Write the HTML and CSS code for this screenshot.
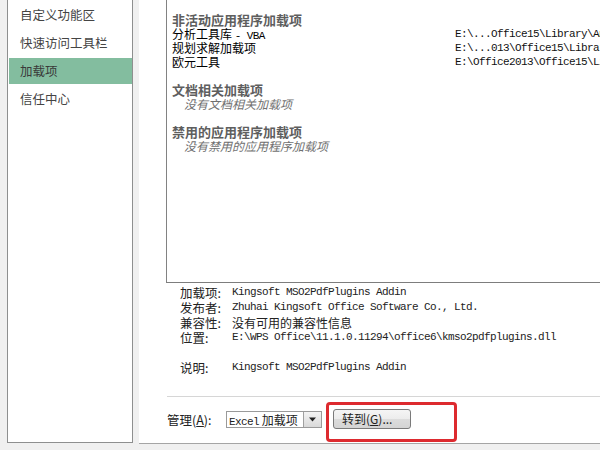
FILE: index.html
```html
<!DOCTYPE html>
<html lang="zh-CN">
<head>
<meta charset="utf-8">
<title>加载项</title>
<link rel="stylesheet" href="styles.css">
</head>
<body>
<div class="page">
  <nav class="sidebar">
    <div class="nav-item">自定义功能区</div>
    <div class="nav-item">快速访问工具栏</div>
    <div class="nav-item active">加载项</div>
    <div class="nav-item">信任中心</div>
  </nav>
  <main class="main">
    <div class="listbox">
      <div class="group-title">非活动应用程序加载项</div>
      <div class="row"><span class="name">分析工具库 <span class="mono">- VBA</span></span><span class="path">E:\...Office15\Library\Analysis\ANALYS32.XLL</span></div>
      <div class="row"><span class="name">规划求解加载项</span><span class="path">E:\...013\Office15\Library\SOLVER\SOLVER.XLAM</span></div>
      <div class="row"><span class="name">欧元工具</span><span class="path">E:\Office2013\Office15\Library\EUROTOOL.XLAM</span></div>
      <div class="blank"></div>
      <div class="group-title">文档相关加载项</div>
      <div class="empty">没有文档相关加载项</div>
      <div class="blank"></div>
      <div class="group-title">禁用的应用程序加载项</div>
      <div class="empty">没有禁用的应用程序加载项</div>
    </div>
    <div class="details">
      <div class="detail"><span class="label">加载项:</span><span class="mono">Kingsoft MSO2PdfPlugins Addin</span></div>
      <div class="detail"><span class="label">发布者:</span><span class="mono">Zhuhai Kingsoft Office Software Co., Ltd.</span></div>
      <div class="detail"><span class="label">兼容性:</span><span class="value">没有可用的兼容性信息</span></div>
      <div class="detail"><span class="label">位置:</span><span class="mono">E:\WPS Office\11.1.0.11294\office6\kmso2pdfplugins.dll</span></div>
      <div class="detail"></div>
      <div class="detail"><span class="label">说明:</span><span class="mono">Kingsoft MSO2PdfPlugins Addin</span></div>
    </div>
    <div class="separator"></div>
    <div class="manage">
      <span class="manage-label">管理(<u>A</u>):</span>
      <div class="select">
        <span class="select-text"><span class="mono">Excel</span> 加载项</span>
        <span class="select-btn"><svg width="9" height="5" viewBox="0 0 9 5"><path d="M1 0.5h7L4.5 4.5z" fill="#222"/></svg></span>
      </div>
      <button class="go-btn">转到(<u>G</u>)...</button>
    </div>
  </main>
</div>
<div class="highlight"></div>
</body>
</html>
```
FILE: styles.css
```css
* { box-sizing: border-box; }
html, body {
  margin: 0;
  padding: 0;
  width: 600px;
  height: 450px;
  overflow: hidden;
  background: #f0f0f0;
  font-family: "Noto Sans CJK SC", "Liberation Sans", sans-serif;
  font-size: 12px;
  color: #222;
}
body { position: relative; }
.page {
  display: flex;
  gap: 6px;
  height: 444px;
  padding-left: 7px;
}
.sidebar {
  width: 126px;
  height: 443px;
  background: #fff;
  border: 1px solid #8e8f8f;
  border-top: none;
  padding: 1px 0 0 1px;
}
.nav-item {
  height: 28px;
  line-height: 28px;
  padding-left: 11px;
  color: #444;
  font-size: 12.5px;
}
.nav-item.active {
  background: #83bd9f;
  color: #3a3a3a;
  height: 26px;
  line-height: 26px;
  margin-top: 1px;
  margin-bottom: 1px;
}
.main {
  flex: 1;
  background: #fff;
  border-bottom: 1px solid #a5a5a5;
  height: 444px;
  padding-left: 27px;
  display: flex;
  flex-direction: column;
  overflow: hidden;
}
.listbox {
  height: 283px;
  flex-shrink: 0;
  border-left: 1px solid #828282;
  border-bottom: 1px solid #7d7d7d;
  padding: 13px 0 0 5px;
  line-height: 14px;
  white-space: nowrap;
  overflow: hidden;
}
.group-title {
  font-weight: bold;
  font-size: 13px;
  line-height: 14px;
  color: #5e5e5e;
  height: 14px;
}
.row {
  display: grid;
  grid-template-columns: 283px 1fr;
  height: 14px;
  line-height: 14px;
  color: #000;
}
.row .name { font-size: 12px; }
.path {
  font-family: "Liberation Mono", monospace;
  font-size: 11px;
  letter-spacing: -0.6px;
  color: #111;
  overflow: hidden;
}
.blank { height: 14px; }
.empty {
  height: 14px;
  line-height: 14px;
  padding-left: 12px;
  font-style: italic;
  color: #6f6f6f;
}
.mono {
  font-family: "Liberation Mono", monospace;
  font-size: 11px;
  letter-spacing: -0.6px;
}
.details {
  margin-top: 2px;
  padding-left: 14px;
  white-space: nowrap;
}
.detail {
  height: 15px;
  line-height: 15px;
  display: flex;
  color: #222;
}
.label {
  width: 52px;
  flex-shrink: 0;
  font-size: 12.5px;
}
.separator {
  margin-top: 21px;
  margin-left: 1px;
  height: 1px;
  background: #d6d6d6;
  flex-shrink: 0;
}
.manage {
  display: flex;
  align-items: center;
  padding-top: 12px;
  padding-left: 1px;
  height: 32px;
}
.manage-label {
  font-size: 12.5px;
  color: #222;
  width: 59px;
}
.select {
  display: flex;
  width: 96px;
  height: 17px;
  border: 1px solid #9a9a9a;
  background: #fff;
}
.select-text {
  flex: 1;
  font-size: 12px;
  line-height: 15px;
  padding-left: 2px;
  white-space: nowrap;
  overflow: hidden;
}
.select-btn {
  width: 18px;
  display: flex;
  align-items: center;
  justify-content: center;
  border-left: 1px solid #a0a0a0;
  background: linear-gradient(#f4f4f4, #d9d9d9);
}
.go-btn {
  margin-left: 11px;
  width: 78px;
  height: 20px;
  border: 1px solid #7a7a7a;
  border-radius: 3px;
  background: linear-gradient(#f5f5f5 0%, #ececec 50%, #dcdcdc 51%, #d4d4d4 100%);
  font-family: "Noto Sans CJK SC", "Liberation Sans", sans-serif;
  font-size: 12px;
  color: #222;
  padding: 0 0 0 8px;
  text-align: left;
  line-height: 18px;
}
.highlight {
  position: absolute;
  left: 326px;
  top: 402px;
  width: 131px;
  height: 40px;
  border: 3px solid #dd2a2f;
  border-radius: 4px;
}
```
